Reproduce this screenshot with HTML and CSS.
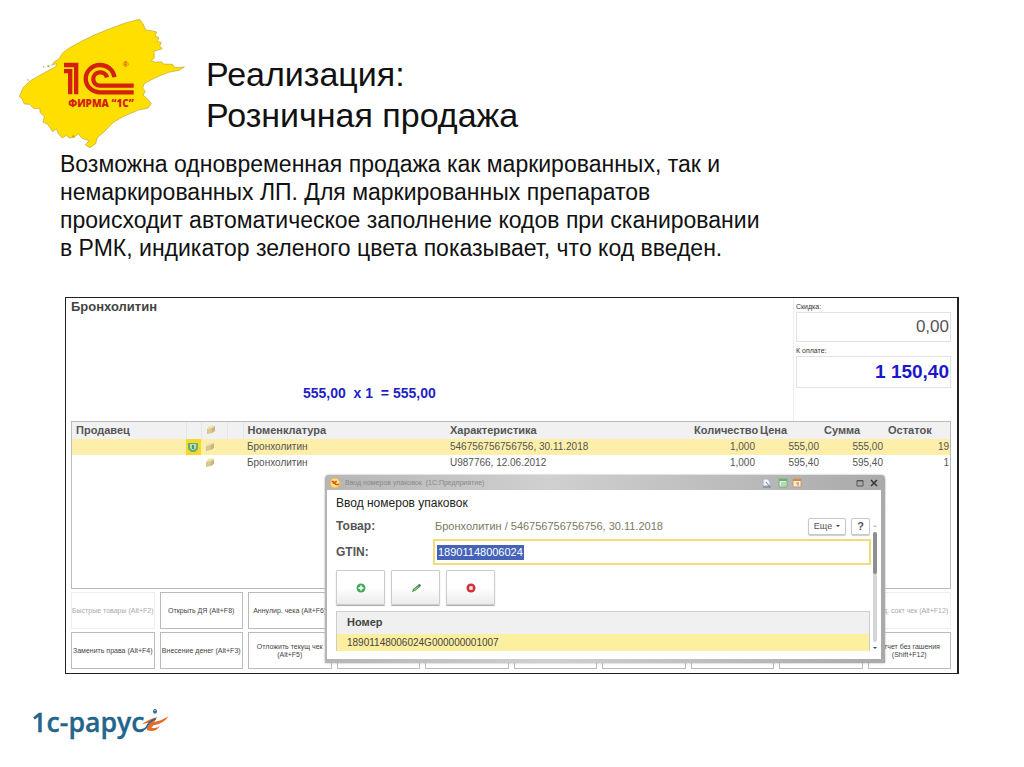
FILE: index.html
```html
<!DOCTYPE html>
<html lang="ru">
<head>
<meta charset="utf-8">
<title>Реализация: Розничная продажа</title>
<link rel="stylesheet" href="styles.css">
</head>
<body>
<main class="slide">
  <header class="head">
    <svg class="brand" viewBox="0 0 570 435" role="img" aria-label="Фирма 1С">
      <path fill="#ffdf00" stroke="#b9a638" stroke-width="2" stroke-linejoin="round" d="M176 115 L214 94 L258 73 L300 56 L346 39 L389 28 L399 41 L407 60 L424 62 L440 66 L435 78 L447 83 L441 94 L454 98 L449 108 L457 116 L432 124 L433 143 L424 152 L437 157 L455 155 L460 162 L488 163 L494 173 L523 171 L507 181 L476 187 L448 198 L424 209 L403 221 L398 234 L406 244 L399 256 L411 265 L424 281 L414 294 L383 301 L343 318 L310 337 L282 366 L262 383 L257 401 L240 413 L226 404 L238 392 L216 385 L205 371 L193 382 L178 384 L169 376 L157 384 L145 371 L139 356 L128 365 L113 343 L99 336 L103 319 L91 309 L89 295 L72 296 L59 283 L43 282 L36 266 L28 260 L40 232 L60 213 L87 197 L117 181 L137 170 L140 160 L125 166 L133 155 L147 147 L158 129 Z"/>
      <g fill="#a5983f"><circle cx="115" cy="169" r="3"/><circle cx="101" cy="171" r="2"/><circle cx="54" cy="210" r="2"/><circle cx="190" cy="379" r="3"/></g>
      <path fill="#d5200f" d="M162 158 H205 V253 H192 V172 H162 Z M162 177 H187 V253 H174 V190 H162 Z"/>
      <g fill="none" stroke="#d5200f" stroke-width="13">
        <path d="M313 202 A43 41 0 1 0 270 247 H371"/>
        <path d="M291 202 A21 20 0 1 0 270 227 H371"/>
      </g>
      <text x="347" y="171" class="brand-reg" text-anchor="middle">®</text>
      <text x="273" y="290" class="brand-name" text-anchor="middle">ФИРМА “1С”</text>
    </svg>
    <h1 class="title">Реализация:<br>Розничная продажа</h1>
  </header>

  <p class="lead">Возможна одновременная продажа как маркированных, так и<br>немаркированных ЛП. Для маркированных препаратов<br>происходит автоматическое заполнение кодов при сканировании<br>в РМК, индикатор зеленого цвета показывает, что код введен.</p>

  <section class="pos">
    <div class="top">
      <div class="current">
        <h2 class="product">Бронхолитин</h2>
        <p class="sum">555,00&nbsp; x 1 &nbsp;= 555,00</p>
      </div>
      <div class="totals">
        <label class="tlabel" for="disc">Скидка:</label>
        <input class="total" id="disc" value="0,00" readonly>
        <label class="tlabel" for="pay">К оплате:</label>
        <input class="total due" id="pay" value="1 150,40" readonly>
      </div>
    </div>

    <div class="goods">
      <table class="grid">
        <colgroup><col class="c-seller"><col class="c-mark"><col class="c-pack"><col class="c-gap"><col class="c-name"><col><col class="c-qty"><col class="c-price"><col class="c-price"><col class="c-qty"></colgroup>
        <thead>
          <tr><th>Продавец</th><th></th><th><svg class="pack" viewBox="0 0 10 10"><path fill="#d9c78c" d="M1 4 6 2 6 8 1 9Z"/><path fill="#eee2b5" d="M1 4 3 1 9 0 6 3Z"/><path fill="#c8b57b" d="M6 3 9 1 9 6 6 8Z"/></svg></th><th></th><th>Номенклатура</th><th>Характеристика</th><th>Количество</th><th>Цена</th><th>Сумма</th><th>Остаток</th></tr>
        </thead>
        <tbody>
          <tr class="picked"><td></td><td class="ok"><svg class="pack" viewBox="0 0 10 10"><path fill="#69ad72" d="M0 1H10V7L7 10H3L0 7Z"/><path fill="#b8dcb4" d="M2 2H8V6L6 8H4L2 6Z"/><path fill="#4c9472" d="M4 3H6V7H4Z"/></svg></td><td><svg class="pack" viewBox="0 0 10 10"><path fill="#d9c78c" d="M1 4 6 2 6 8 1 9Z"/><path fill="#eee2b5" d="M1 4 3 1 9 0 6 3Z"/><path fill="#c8b57b" d="M6 3 9 1 9 6 6 8Z"/></svg></td><td></td><td>Бронхолитин</td><td>546756756756756, 30.11.2018</td><td class="num">1,000</td><td class="num">555,00</td><td class="num">555,00</td><td class="num">19</td></tr>
          <tr><td></td><td></td><td><svg class="pack" viewBox="0 0 10 10"><path fill="#d9c78c" d="M1 4 6 2 6 8 1 9Z"/><path fill="#eee2b5" d="M1 4 3 1 9 0 6 3Z"/><path fill="#c8b57b" d="M6 3 9 1 9 6 6 8Z"/></svg></td><td></td><td>Бронхолитин</td><td>U987766, 12.06.2012</td><td class="num">1,000</td><td class="num">595,40</td><td class="num">595,40</td><td class="num">1</td></tr>
        </tbody>
      </table>
    </div>

    <div class="keys">
      <button class="key off" disabled>Быстрые товары (Alt+F2)</button>
      <button class="key">Открыть ДЯ (Alt+F8)</button>
      <button class="key">Аннулир. чека (Alt+F6)</button>
      <button class="key"></button><button class="key"></button><button class="key"></button><button class="key"></button><button class="key"></button><button class="key"></button>
      <button class="key off" disabled>Пред. сокт чек (Alt+F12)</button>
      <button class="key">Заменить права (Alt+F4)</button>
      <button class="key">Внесение денег (Alt+F3)</button>
      <button class="key">Отложить текущ чек<br>(Alt+F5)</button>
      <button class="key"></button><button class="key"></button><button class="key"></button><button class="key"></button><button class="key"></button><button class="key"></button>
      <button class="key">Отчет без гашения<br>(Shift+F12)</button>
    </div>

    <div class="dialog" role="dialog" aria-labelledby="dlg">
      <div class="bar">
        <svg class="app" viewBox="0 0 12 12"><circle cx="6" cy="6" r="5" fill="#ffe096" stroke="#f6b53c"/><path fill="none" stroke="#d65a18" stroke-width="1.5" d="M2.500 4.500H4.500V7M8 4.500A1.500 1.500 0 1 0 7 7.500H10"/></svg>
        <span class="caption">Ввод номеров упаковок&nbsp; (1С:Предприятие)</span>
        <svg class="tools" viewBox="0 0 42 12"><path fill="#f2f4f7" stroke="#a9afb8" d="M2 2H7L9 5V9H2Z"/><path stroke="#687f9c" d="M5 5 9 10M2 10H10"/><path fill="#e3efe2" stroke="#68b36d" d="M18 2H26V10H18Z"/><path stroke="#68b36d" stroke-width="2" d="M18 3H26"/><path stroke="#8bbd8d" d="M20 6H25M20 8H25"/><path fill="#f5ead9" stroke="#d19a60" d="M32 2H40V10H32Z"/><path stroke="#db8b3e" stroke-width="2" d="M32 3H40"/><path stroke="#b68d69" d="M35 6H38M37 6V9"/></svg>
        <button class="win" aria-label="Развернуть"><svg viewBox="0 0 8 8"><path fill="none" stroke="#555" d="M1 1.500H7V7H1ZM1 2H7"/></svg></button>
        <button class="win" aria-label="Закрыть"><svg viewBox="0 0 8 8"><path stroke="#333" stroke-width="1.500" d="M1 1 7 7M7 1 1 7"/></svg></button>
      </div>
      <div class="pane">
        <div class="form">
          <h3 class="dtitle" id="dlg">Ввод номеров упаковок</h3>
          <div class="row"><span class="name">Товар:</span><span class="value">Бронхолитин / 546756756756756, 30.11.2018</span><button class="more">Еще <i class="arrow"></i></button><button class="more help">?</button></div>
          <div class="row gtin"><label class="name" for="gtin">GTIN:</label><div class="field"><input class="code" id="gtin" value="18901148006024" size="14"></div></div>
          <div class="acts">
            <button class="act" aria-label="Добавить"><svg viewBox="0 0 10 10"><circle cx="5" cy="5" r="4.500" fill="#42a85a"/><path stroke="#eefbea" stroke-width="1.800" d="M5 2.500V7.500M2.500 5H7.500"/></svg></button>
            <button class="act" aria-label="Изменить"><svg viewBox="0 0 10 10"><path fill="#4c9a50" d="M1 9 2 6 7 2 9 4 4 8Z"/><path fill="#3c6454" d="M7 2 8 1 10 2 9 4Z"/><path stroke="#a7d4a3" d="M3 7 7 4"/></svg></button>
            <button class="act" aria-label="Удалить"><svg viewBox="0 0 10 10"><circle cx="5" cy="5" r="4.500" fill="#cf3038"/><path stroke="#ffe2df" stroke-width="1.800" d="M3.500 3.500 6.500 6.500M6.500 3.500 3.500 6.500"/></svg></button>
          </div>
          <table class="codes"><thead><tr><th>Номер</th></tr></thead><tbody><tr><td>18901148006024G000000001007</td></tr></tbody></table>
        </div>
        <div class="scroll"><i class="up"></i><div class="track"><div class="thumb"></div></div><i class="arrow"></i></div>
      </div>
    </div>
  </section>

  <footer class="foot">
    <svg class="rarus" viewBox="0 0 480 150" role="img" aria-label="1С-Рарус">
      <text x="34" y="96" class="rarus-name">1с-рарус</text>
      <path fill="#e56b2e" d="M365 73 Q382 60 411 51 L403 66 Q426 62 446 49 Q430 72 401 76 L394 83 Q410 87 420 77 Q408 98 382 91 Q377 87 390 68 Q379 68 365 73Z"/>
      <path fill="none" stroke="#1f6790" stroke-width="5" d="M352 94 Q376 93 384 74 Q393 60 407 57"/>
      <ellipse cx="405" cy="34" rx="6" ry="7" fill="#2a6d92"/><path d="M402 32 407 31" stroke="#acd2df" stroke-width="3"/>
    </svg>
  </footer>
</main>
</body>
</html>
```
FILE: styles.css
```css
* { box-sizing: border-box; }
body { margin: 0; background: #fff; color: #111; font-family: "Liberation Sans", Arial, sans-serif; }
h1, h2, h3, p { margin: 0; font-weight: normal; }
button, input { font-family: inherit; margin: 0; }
svg { display: block; }

.slide { padding: 10px 0 16px; }
.head { display: flex; align-items: flex-start; gap: 6px; padding-left: 10px; height: 140px; }
.brand { width: 190px; height: 145px; flex: none; }
.brand-name { font-size: 30px; font-weight: 800; font-family: "Open Sans", sans-serif; fill: #d5200f; }
.brand-reg { font-size: 24px; fill: #d5200f; }
.title { padding-top: 44px; font-size: 34px; line-height: 41px; }
.lead { padding: 0 60px; font-size: 23px; line-height: 28px; white-space: nowrap; }

.pos { position: relative; margin: 35px 65px 0; padding: 0 6px 4px 5px; border: 1px solid #222; border-right-width: 2px; }
.top { display: flex; height: 123px; }
.current { flex: 1; }
.product { font-size: 13px; line-height: 18px; font-weight: 700; color: #444; }
.sum { padding: 68px 0 0 232px; font-size: 14px; line-height: 18px; font-weight: 700; color: #221fc4; }
.totals { width: 158px; padding: 3px 0 0 2px; border-left: 1px solid #eee; }
.tlabel { display: block; font-size: 7px; line-height: 11px; color: #333; }
.total { display: block; width: 100%; height: 30px; padding: 0 1px; border: 1px solid #e2e2e2; background: #fff; font-size: 17px; text-align: right; color: #555; }
.total + .tlabel { padding-top: 3px; }
.due { height: 32px; font-size: 19px; font-weight: 700; color: #1c17cb; }

.goods { height: 168px; border: 1px solid #bbb; }
.grid { width: 100%; table-layout: fixed; border-collapse: collapse; font-size: 10px; line-height: 14px; color: #555; }
.grid th { height: 17px; padding: 0 0 2px 4px; background: #f1f1f1; text-align: left; font-size: 11px; font-weight: 700; white-space: nowrap; }
.grid td { height: 16px; padding: 0 4px; white-space: nowrap; }
.grid th:nth-child(n+2):nth-child(-n+5) { border-left: 1px solid #e6e6e6; }
.grid .num { padding: 0 1px; text-align: right; }
.picked { background: #fdefa9; }
.grid .ok { padding: 0 2px; background: #f5d92c; }
.pack { width: 10px; height: 10px; }
.c-seller { width: 114px; }
.c-mark { width: 15px; }
.c-pack { width: 26px; }
.c-gap { width: 16px; }
.c-name { width: 203px; }
.c-qty { width: 66px; }
.c-price { width: 64px; }

.keys { display: grid; grid-template-columns: repeat(10, minmax(0, 1fr)); grid-auto-rows: 37px; gap: 3px 5px; padding-top: 3px; }
.key { display: flex; align-items: center; justify-content: center; padding: 0; border: 1px solid #bbb; background: #fff; color: #444; font-size: 7px; line-height: 8px; white-space: nowrap; }
.off { border-color: #eee; color: #aaa; }

.dialog { position: absolute; left: 259px; right: 72px; top: 177px; height: 188px; display: flex; flex-direction: column; padding: 0 4px 4px 2px; border-radius: 4px 4px 0 0; background: linear-gradient(90deg, #b5b5b5, #d0d0d0 40%, #aaa); box-shadow: 0 0 2px #999; }
.bar { display: flex; align-items: center; height: 15px; flex: none; padding: 0 2px; gap: 4px; }
.app { width: 12px; height: 12px; }
.caption { flex: 1; font-size: 7px; color: #888; }
.tools { width: 42px; height: 12px; margin-right: 48px; }
.win { width: 10px; height: 10px; padding: 1px; border: 0; background: none; }
.win svg { width: 8px; height: 8px; }
.pane { flex: 1; display: flex; padding: 0 2px 6px 9px; background: #fff; }
.form { flex: 1; }
.dtitle { padding-top: 3px; font-size: 12px; line-height: 20px; color: #222; }
.row { display: flex; align-items: center; height: 26px; font-size: 12px; }
.name { width: 97px; font-weight: 700; color: #555; }
.value { flex: 1; padding-left: 2px; font-size: 11px; color: #7c7863; }
.more { display: flex; align-items: center; justify-content: center; gap: 4px; width: 38px; height: 17px; padding: 0; border: 1px solid #c8c8c8; border-radius: 2px; background: #fff; box-shadow: 0 1px 1px #ccc; color: #555; font-size: 9px; }
.help { width: 19px; margin: 0 1px 0 5px; font-size: 11px; font-weight: 700; }
.arrow { width: 0; border: 2px solid transparent; border-top: 2px solid #444; border-bottom: 0; }
.field { flex: 1; display: flex; align-items: center; height: 26px; padding-left: 2px; border: 2px solid #f0dc78; }
.code { width: 87px; height: 15px; padding: 0 1px; border: 0; outline: 0; background: #4563b8; color: #fff; font-size: 11px; line-height: 15px; }
.acts { display: flex; gap: 6px; padding: 5px 0 6px; }
.act { display: flex; align-items: center; justify-content: center; width: 49px; height: 35px; padding: 0; border: 1px solid #ccc; border-radius: 1px; background: linear-gradient(#fff 50%, #ececec); box-shadow: 0 1px 1px #aaa; }
.act svg { width: 10px; height: 10px; }
.codes { width: calc(100% - 1px); border-collapse: collapse; border: 1px solid #ccc; border-bottom: 0; text-align: left; color: #444; }
.codes th { height: 22px; padding: 0 10px 2px; background: #f0f0f0; font-size: 11px; }
.codes td { height: 17px; padding: 0 10px; background: #fcef9f; font-size: 10px; }
.scroll { display: flex; flex-direction: column; align-items: center; width: 8px; gap: 5px; padding: 35px 0 4px; }
.up { width: 0; border: 2px solid transparent; border-bottom: 2px solid #bbb; border-top: 0; }
.track { flex: 1; width: 4px; border-radius: 2px; background: #d5d5d5; }
.thumb { height: 42px; border-radius: 2px; background: #8e8e8e; }

.foot { padding: 26px 20px 0; }
.rarus { width: 160px; height: 50px; }
.rarus-name { font-family: "Open Sans", sans-serif; font-size: 80px; font-weight: 600; fill: #1f6790; stroke: #1f5878; stroke-width: 1px; }
```
